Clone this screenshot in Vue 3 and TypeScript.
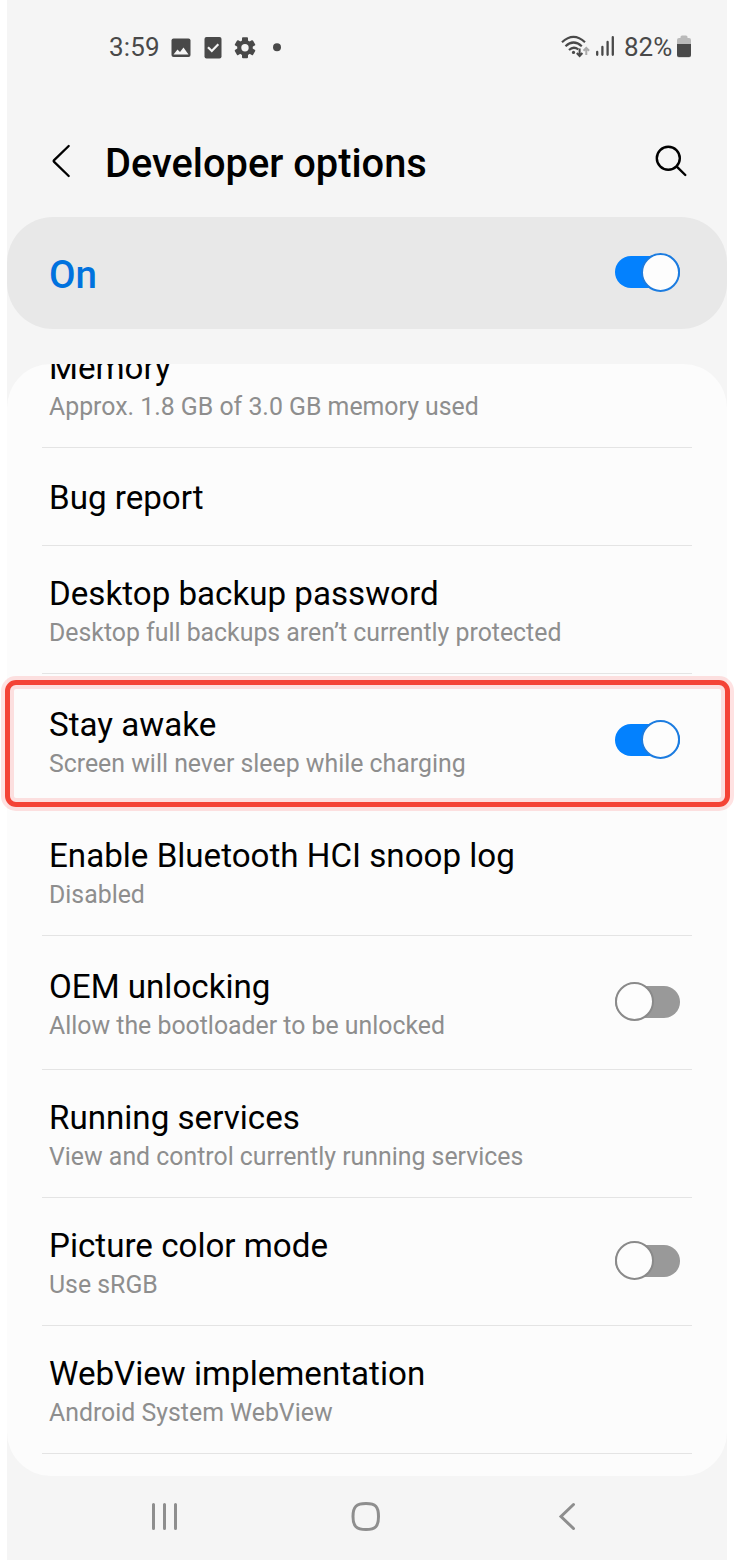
<script setup lang="ts">
import { ref } from 'vue'

interface Option {
  title: string
  summary?: string
  toggle?: boolean
  on?: boolean
  highlighted?: boolean
  kind?: string
}

const enabled = ref(true)
const options = ref<Option[]>([
  { title: 'Memory', summary: 'Approx. 1.8 GB of 3.0 GB memory used' },
  { title: 'Bug report', kind: 'single' },
  { title: 'Desktop backup password', summary: 'Desktop full backups aren’t currently protected' },
  { title: 'Stay awake', summary: 'Screen will never sleep while charging', toggle: true, on: true, highlighted: true, kind: 'tall' },
  { title: 'Enable Bluetooth HCI snoop log', summary: 'Disabled' },
  { title: 'OEM unlocking', summary: 'Allow the bootloader to be unlocked', toggle: true, on: false, kind: 'tall' },
  { title: 'Running services', summary: 'View and control currently running services' },
  { title: 'Picture color mode', summary: 'Use sRGB', toggle: true, on: false },
  { title: 'WebView implementation', summary: 'Android System WebView' },
])
</script>

<template>
  <div class="phone">
    <header class="status">
      <span class="time">3:59</span>
      <svg class="notifications" width="116" height="24" viewBox="168 35 116 24">
        <rect x="171.5" y="38.5" width="19" height="18.5" rx="2" fill="#494949" />
        <path d="M173.5 54.5 177.500 49.500 180 52 183.500 47.500 188.500 54.500Z" fill="#f5f5f5" />
        <rect x="204.500" y="37" width="17" height="21.500" rx="2" fill="#494949" />
        <path d="M208 47.200 211.800 51 218.300 44.300" fill="none" stroke="#f5f5f5" stroke-width="2.200" />
        <g transform="translate(245 47.7)" fill="#494949">
          <rect v-for="a in [0, 60, 120]" :key="a" x="-3" y="-10.500" width="6" height="21" rx="1" :transform="`rotate(${a})`" />
          <circle r="5.700" fill="none" stroke="#494949" stroke-width="4.200" />
          <circle r="3.700" fill="#f5f5f5" />
        </g>
        <circle cx="277" cy="47.200" r="4" fill="#494949" />
      </svg>
      <div class="spacer"></div>
      <svg class="signal" width="58" height="26" viewBox="560 34 58 26">
        <g fill="none" stroke="#494949" stroke-width="2.200">
          <path d="M562 42.200Q573.500 31.500 585 42.200" />
          <path d="M565.500 46.200Q573.500 38.800 581.800 46.200" />
          <path d="M569 50Q573.500 45.800 578.300 49.400" />
          <path d="M579.600 48.500V56M576.800 53 579.600 56 582.400 53" stroke-width="2" />
          <path d="M586.300 55V48M583.500 50.800 586.300 48 589.100 50.800" stroke="#aaa" stroke-width="2" />
        </g>
        <circle cx="573.500" cy="52.400" r="1.600" fill="#494949" />
        <path d="M597.200 52V54.800M602.400 47V54.800M607.600 42V54.800M612.800 37.200V54.800" stroke="#494949" stroke-width="2.300" stroke-linecap="round" />
      </svg>
      <span class="percent">82%</span>
      <svg class="battery" width="16" height="24" viewBox="676 34 16 24">
        <path d="M679 38H680.500V37Q680.500 35.500 682 35.500H686Q687.500 35.500 687.500 37V38H689Q691 38 691 40V55.500Q691 57.500 689 57.500H679Q677 57.500 677 55.500V40Q677 38 679 38Z" fill="#bababa" />
        <path d="M677 44H691V55Q691 57 689 57H679Q677 57 677 55Z" fill="#494949" />
      </svg>
    </header>

    <div class="appbar">
      <svg class="back" width="24" height="36" viewBox="50 143 24 36" fill="none" stroke="#000" stroke-width="2.300" stroke-linecap="round" stroke-linejoin="round">
        <path d="M68.700 146 53.900 160.300Q53.300 161 53.900 161.700L68.700 176" />
      </svg>
      <h1>Developer options</h1>
      <svg class="search" width="36" height="36" viewBox="654 143 36 36" fill="none" stroke="#000" stroke-width="2.400" stroke-linecap="round">
        <circle cx="668.300" cy="158.300" r="11.500" />
        <path d="M676.800 166.600 685.300 175" />
      </svg>
    </div>

    <section class="master">
      <span>On</span>
      <button class="switch" :class="{ on: enabled }" aria-label="Developer options" @click="enabled = !enabled"><i></i></button>
    </section>

    <main class="card">
      <div v-for="o in options" :key="o.title" class="row" :class="[o.kind, { highlighted: o.highlighted }]">
        <div class="text">
          <div class="title">{{ o.title }}</div>
          <div v-if="o.summary" class="summary">{{ o.summary }}</div>
        </div>
        <button v-if="o.toggle" class="switch" :class="{ on: o.on }" :aria-label="o.title" @click="o.on = !o.on"><i></i></button>
      </div>
    </main>

    <nav class="navbar">
      <svg width="30" height="30" viewBox="150 1502 30 30" stroke="#8e8e8e" stroke-width="3" stroke-linecap="round">
        <path d="M153.500 1504.500V1528.500M164.500 1504.500V1528.500M175.500 1504.500V1528.500" />
      </svg>
      <svg width="30" height="30" viewBox="351 1502 30 30" fill="none" stroke="#8e8e8e" stroke-width="3">
        <path d="M366 1503.500C375.500 1503.500 378.500 1506.500 378.500 1516.500S375.500 1529.500 366 1529.500 353 1526.500 353 1516.500 356.500 1503.500 366 1503.500Z" />
      </svg>
      <svg width="30" height="30" viewBox="552 1502 30 30" fill="none" stroke="#8e8e8e" stroke-width="3" stroke-linecap="round">
        <path d="M573.500 1504.500 561 1516.500 573.500 1528.500" />
      </svg>
    </nav>
  </div>
</template>

<style>
body {
  margin: 0;
  background: #fff;
}
</style>

<style scoped>
.phone {
  box-sizing: border-box;
  width: 720px;
  height: 1560px;
  margin-left: 7px;
  display: flex;
  flex-direction: column;
  background: #f5f5f5;
  font-family: Roboto, "Liberation Sans", sans-serif;
  color: #000;
}
.status {
  display: flex;
  align-items: center;
  height: 94px;
  padding: 0 35px 0 102px;
  box-sizing: border-box;
  color: #494949;
  font-size: 26px;
}
.time {
  width: 59px;
  letter-spacing: 0.2px;
}
.spacer {
  flex: 1;
}
.percent {
  width: 52px;
  margin-left: 6px;
  white-space: nowrap;
}
.battery {
  margin-top: -2px;
}
.signal {
  flex: none;
}
.appbar {
  display: flex;
  align-items: center;
  height: 123px;
  padding: 10px 37px 0 43px;
  box-sizing: border-box;
}
.appbar h1 {
  flex: 1;
  margin: 6px 0 0 31px;
  font-size: 39.800px;
  line-height: 48px;
  font-weight: 500;
}
.master {
  display: flex;
  align-items: center;
  justify-content: space-between;
  height: 112px;
  flex: none;
  padding: 0 47px 0 42px;
  border-radius: 46px;
  background: #e8e8e8;
  color: #0072de;
  font-size: 38.500px;
  font-weight: 500;
}
.master span {
  padding-top: 3px;
}
.card {
  margin-top: 35px;
  height: 1112px;
  flex: none;
  overflow-x: visible;
  overflow-y: clip;
  border-radius: 44px;
  background: #fcfcfc;
}
.row {
  position: relative;
  display: flex;
  align-items: center;
  justify-content: space-between;
  box-sizing: border-box;
  height: 128px;
  margin: 0 35px;
  padding: 0 12px 0 7px;
  border-bottom: 1px solid #e4e4e4;
}
.row:first-child {
  margin-top: -44px;
}
.row.single {
  height: 98px;
}
.row.tall {
  height: 134px;
}
.row.highlighted {
  border-bottom-color: transparent;
}
.text {
  padding-top: 7px;
  white-space: nowrap;
}
.single .text {
  padding-top: 3px;
}
.title {
  font-size: 33.150px;
  line-height: 40px;
}
.summary {
  font-size: 24.850px;
  line-height: 38px;
  color: #8e8e8e;
}
.switch {
  display: flex;
  align-items: center;
  flex: none;
  width: 65px;
  height: 32px;
  padding: 0;
  margin: 0 0 2px;
  border: 0;
  border-radius: 16px;
  background: #999;
}
.switch i {
  box-sizing: border-box;
  flex: none;
  width: 39px;
  height: 39px;
  border: 2px solid #8a8a8a;
  border-radius: 50%;
  background: #fdfdfd;
}
.switch.on {
  justify-content: flex-end;
  background: #0381fe;
}
.switch.on i {
  border-color: #1c7ce0;
}
.navbar {
  display: flex;
  align-items: center;
  justify-content: space-between;
  height: 84px;
  padding: 0 145px 2px 143px;
  box-sizing: border-box;
}
/* Callout frame around the highlighted setting; it extends past the card edges. */
.highlighted::after {
  content: "";
  position: absolute;
  z-index: 1;
  box-sizing: border-box;
  top: 6px;
  left: -37px;
  width: 725px;
  height: 127px;
  border: 5px solid #f44336;
  border-radius: 11px;
  box-shadow: 0 0 0 4px rgba(255, 50, 50, 0.140), inset 0 0 0 4px rgba(255, 50, 50, 0.140);
  pointer-events: none;
}
</style>
